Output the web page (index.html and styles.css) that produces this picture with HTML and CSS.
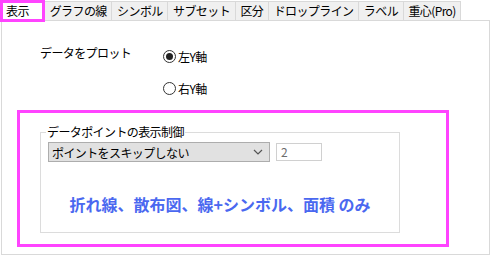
FILE: index.html
```html
<!DOCTYPE html>
<html lang="ja">
<head>
  <meta charset="UTF-8">
  <title>表示</title>
  <link rel="stylesheet" href="styles.css">
</head>
<body>
  <div class="tabs">
    <div class="tab active">表示</div>
    <div class="tab">グラフの線</div>
    <div class="tab">シンボル</div>
    <div class="tab">サブセット</div>
    <div class="tab">区分</div>
    <div class="tab">ドロップライン</div>
    <div class="tab">ラベル</div>
    <div class="tab">重心(Pro)</div>
  </div>

  <div class="panel">
    <div class="plot">
      <div class="plot-label">データをプロット</div>
      <div class="radios">
        <label class="radio"><span class="dot checked"></span>左Y軸</label>
        <label class="radio"><span class="dot"></span>右Y軸</label>
      </div>
    </div>

    <div class="highlight">
      <fieldset class="group">
        <legend>データポイントの表示制御</legend>
        <div class="row">
          <div class="select">
            <span>ポイントをスキップしない</span>
            <svg width="10" height="6" viewBox="0 0 10 6"><polyline points="1,1 5,5 9,1" fill="none" stroke="#555" stroke-width="1.2"/></svg>
          </div>
          <div class="input">2</div>
        </div>
        <div class="note">折れ線、散布図、線+シンボル、面積 のみ</div>
      </fieldset>
    </div>
  </div>
</body>
</html>
```

FILE: styles.css
```css
body {
  margin: 0;
  width: 492px;
  height: 257px;
  background: #fff;
  font-family: "Noto Sans CJK JP", sans-serif;
  font-size: 12px;
  color: #000;
  overflow: hidden;
}

.tabs {
  display: flex;
  align-items: flex-end;
  height: 20px;
  padding-left: 1px;
}

.tab {
  box-sizing: border-box;
  height: 19px;
  line-height: 18px;
  padding: 0 4.7px;
  margin-left: -1px;
  background: #f0f0f0;
  border: 1px solid #d9d9d9;
  border-bottom: none;
  letter-spacing: -0.6px;
  white-space: nowrap;
}

.tab.active {
  position: relative;
  z-index: 1;
  height: 22px;
  width: 45px;
  margin-bottom: -2px;
  line-height: 16px;
  padding: 0 3px;
  background: #fff;
  border: 3px solid #ff44ff;
}

.panel {
  box-sizing: border-box;
  height: 235px;
  margin: 0 2px 0 1px;
  border: 1px solid #d9d9d9;
}

.plot {
  display: flex;
  margin: 24px 0 0 38px;
}

.plot-label {
  width: 123px;
  line-height: 16px;
  letter-spacing: -0.6px;
}

.radios {
  display: flex;
  flex-direction: column;
  gap: 16px;
  padding-top: 3px;
}

.radio {
  display: flex;
  align-items: center;
  height: 16px;
  letter-spacing: -0.6px;
}

.dot {
  box-sizing: border-box;
  width: 13px;
  height: 13px;
  margin-right: 2px;
  border: 1px solid #333;
  border-radius: 50%;
  background: #fff;
  position: relative;
}

.dot.checked::after {
  content: "";
  position: absolute;
  left: 2px;
  top: 2px;
  width: 7px;
  height: 7px;
  border-radius: 50%;
  background: #222;
}

.highlight {
  box-sizing: border-box;
  width: 432px;
  height: 137px;
  margin: 14px 0 0 15px;
  border: 3px solid #ff44ff;
  padding-top: 11px;
  padding-left: 20px;
}

.group {
  box-sizing: border-box;
  width: 360px;
  height: 109px;
  margin: 0;
  padding: 0 5px;
  min-width: 0;
  border: 1px solid #dcdcdc;
}

.group legend {
  padding: 0 1px;
  line-height: 16px;
  letter-spacing: -0.6px;
}

.row {
  display: flex;
  align-items: center;
  margin: 2px 0 0 2px;
}

.select {
  box-sizing: border-box;
  display: flex;
  align-items: center;
  justify-content: space-between;
  width: 222px;
  height: 20px;
  padding: 0 6px 0 3px;
  background: #e1e1e1;
  border: 1px solid #adadad;
  letter-spacing: -0.6px;
}

.input {
  box-sizing: border-box;
  width: 46px;
  height: 18px;
  margin-left: 6px;
  padding-left: 4px;
  line-height: 16px;
  border: 1px solid #d0d0d0;
  color: #6d6d6d;
}

.note {
  margin-top: 33px;
  text-align: center;
  font-size: 16px;
  font-weight: bold;
  color: #4a68f0;
  line-height: 19px;
}
```
